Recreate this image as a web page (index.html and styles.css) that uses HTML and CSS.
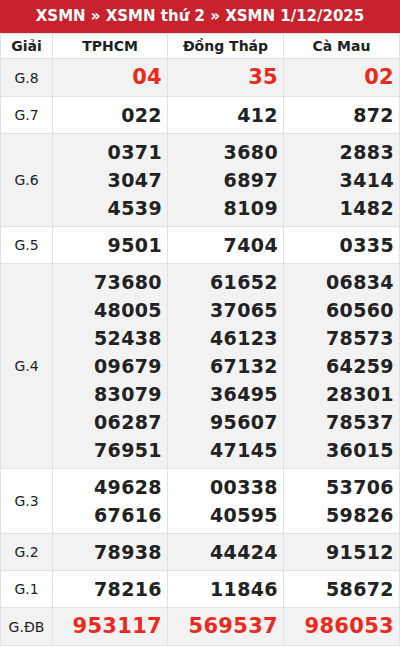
FILE: index.html
```html
<!DOCTYPE html>
<html lang="vi">
<head>
<meta charset="utf-8">
<link rel="stylesheet" href="styles.css">
</head>
<body>
<div class="title">XSMN » XSMN thứ 2 » XSMN 1/12/2025</div>
<table class="kq">
  <colgroup><col class="c0"><col class="c1"><col class="c2"><col class="c3"></colgroup>
  <thead>
    <tr><th>Giải</th><th>TPHCM</th><th>Đồng Tháp</th><th>Cà Mau</th></tr>
  </thead>
  <tbody>
    <tr class="alt g8"><td class="g">G.8</td><td><div class="red">04</div></td><td><div class="red">35</div></td><td><div class="red">02</div></td></tr>
    <tr><td class="g">G.7</td><td><div>022</div></td><td><div>412</div></td><td><div>872</div></td></tr>
    <tr class="alt"><td class="g">G.6</td><td><div>0371</div><div>3047</div><div>4539</div></td><td><div>3680</div><div>6897</div><div>8109</div></td><td><div>2883</div><div>3414</div><div>1482</div></td></tr>
    <tr><td class="g">G.5</td><td><div>9501</div></td><td><div>7404</div></td><td><div>0335</div></td></tr>
    <tr class="alt"><td class="g">G.4</td>
      <td><div>73680</div><div>48005</div><div>52438</div><div>09679</div><div>83079</div><div>06287</div><div>76951</div></td>
      <td><div>61652</div><div>37065</div><div>46123</div><div>67132</div><div>36495</div><div>95607</div><div>47145</div></td>
      <td><div>06834</div><div>60560</div><div>78573</div><div>64259</div><div>28301</div><div>78537</div><div>36015</div></td></tr>
    <tr><td class="g">G.3</td><td><div>49628</div><div>67616</div></td><td><div>00338</div><div>40595</div></td><td><div>53706</div><div>59826</div></td></tr>
    <tr class="alt"><td class="g">G.2</td><td><div>78938</div></td><td><div>44424</div></td><td><div>91512</div></td></tr>
    <tr><td class="g">G.1</td><td><div>78216</div></td><td><div>11846</div></td><td><div>58672</div></td></tr>
    <tr class="alt db"><td class="g">G.ĐB</td><td><div class="red">953117</div></td><td><div class="red">569537</div></td><td><div class="red">986053</div></td></tr>
  </tbody>
</table>
</body>
</html>
```
FILE: styles.css
```css
html, body { margin: 0; padding: 0; background: #fff; }
body { font-family: "DejaVu Sans", sans-serif; color: #222; width: 400px; }
.title {
  background: #c8232c;
  color: #fff;
  font-weight: bold;
  font-size: 15px;
  line-height: 21px;
  padding: 6px 0;
  text-align: center;
}
.kq {
  width: 399px;
  border-collapse: collapse;
  table-layout: fixed;
  border: 1px solid #dfe1e5;
}
.c0 { width: 52px; }
.c1 { width: 115px; }
.c2 { width: 116px; }
.c3 { width: 116px; }
.kq th, .kq td { border: 1px solid #dfe1e5; padding: 0; }
.kq th {
  font-size: 14px;
  line-height: 16px;
  padding: 4px 0;
  font-weight: bold;
  text-align: center;
  color: #222;
}
.kq td { text-align: right; padding: 4px 5px 4px 0; vertical-align: middle; }
.kq td.g { text-align: center; font-size: 14px; padding: 0; color: #222; }
.kq td div { font-size: 19px; font-weight: bold; line-height: 28px; letter-spacing: 0.4px; }
.alt td { background: #f2f2f3; }
.kq td div.red { color: #ea2a1d; font-size: 21px; line-height: 29px; letter-spacing: 0.3px; }
```
